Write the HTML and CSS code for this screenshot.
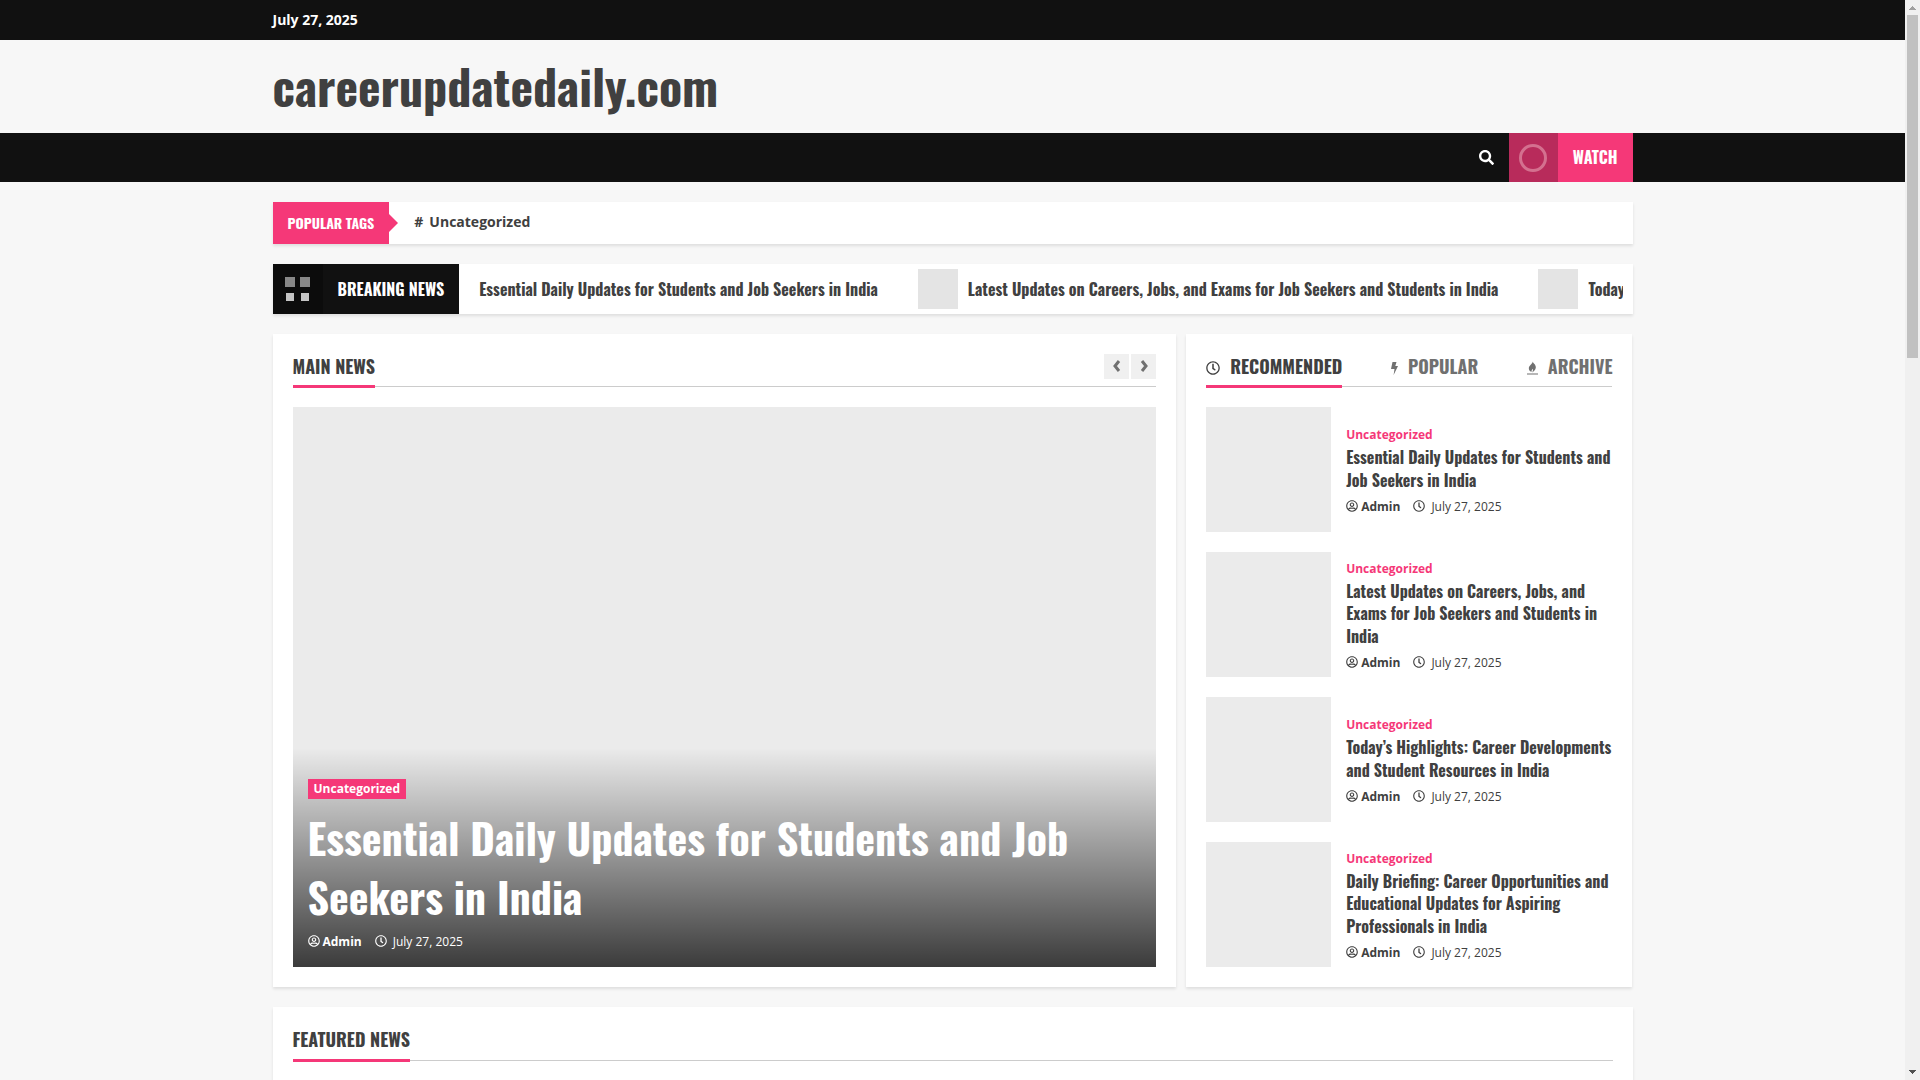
FILE: index.html
```html
<!DOCTYPE html>
<html lang="en">
<head>
<meta charset="utf-8">
<meta name="viewport" content="width=device-width, initial-scale=1">
<title>careerupdatedaily.com</title>
<link rel="stylesheet" href="styles.css">
</head>
<body>
<svg class="sprite" aria-hidden="true">
  <symbol id="clock" viewBox="0 0 512 512">
    <path d="M256 8C119 8 8 119 8 256s111 248 248 248 248-111 248-248S393 8 256 8zm0 448c-110.500 0-200-89.500-200-200S145.500 56 256 56s200 89.500 200 200-89.500 200-200 200zm61.800-104.400l-84.900-61.700c-3.100-2.300-4.900-5.900-4.900-9.700V116c0-6.600 5.400-12 12-12h32c6.600 0 12 5.400 12 12v141.700l66.800 48.600c5.400 3.900 6.500 11.400 2.600 16.800L334.600 349c-3.900 5.300-11.400 6.500-16.800 2.600z"/>
  </symbol>
  <symbol id="user" viewBox="0 0 496 512">
    <path d="M248 104c-53 0-96 43-96 96s43 96 96 96 96-43 96-96-43-96-96-96zm0 144c-26.500 0-48-21.500-48-48s21.500-48 48-48 48 21.500 48 48-21.500 48-48 48zm0-240C111 8 0 119 0 256s111 248 248 248 248-111 248-248S385 8 248 8zm0 448c-49.700 0-95.100-18.300-130.100-48.400 14.900-23 40.400-38.600 69.600-39.500 20.800 6.400 40.600 9.600 60.500 9.600s39.700-3.100 60.500-9.600c29.200 1 54.700 16.500 69.600 39.500-35 30.100-80.400 48.400-130.100 48.400zm162.700-84.100c-24.400-31.400-62.100-51.900-105.100-51.900-10.200 0-26 9.600-57.600 9.600-31.500 0-47.400-9.600-57.600-9.600-42.900 0-80.600 20.500-105.100 51.900C61.900 339.200 48 299.200 48 256c0-110.300 89.700-200 200-200s200 89.700 200 200c0 43.200-13.900 83.200-37.300 115.900z"/>
  </symbol>
  <symbol id="search" viewBox="0 0 512 512">
    <path d="M505 442.700L405.300 343c-4.500-4.500-10.600-7-17-7H372c27.600-35.300 44-79.700 44-128C416 93.100 322.900 0 208 0S0 93.100 0 208s93.100 208 208 208c48.300 0 92.700-16.400 128-44v16.300c0 6.400 2.500 12.500 7 17l99.700 99.700c9.400 9.400 24.600 9.400 33.900 0l28.300-28.300c9.400-9.400 9.400-24.600.1-34zM208 336c-70.700 0-128-57.200-128-128 0-70.700 57.200-128 128-128 70.700 0 128 57.200 128 128 0 70.700-57.200 128-128 128z"/>
  </symbol>
  <symbol id="bolt" viewBox="0 0 7 14"><path d="M1.500 1H5.500L4.300 5H7L2.600 14l.9-6H0z"/></symbol>
  <symbol id="fire" viewBox="0 0 12 14"><path d="M6.300 0c.2 2 3.700 3.300 3.300 6.800-.3 2.600-2.300 3.700-3.700 5 .2-1.600.9-2.500.5-4.100-1 .9-1.600 1.900-1.500 3.600C3 10.500 1.800 9 2 7c.3-2.700 3.800-4 4.300-7zM0 13h12v1H0z"/></symbol>
</svg>

<div class="window">
  <div class="page">
    <div class="topbar"><div class="container">July 27, 2025</div></div>
    <header class="masthead"><div class="container"><h1 class="site-title"><a href="#">careerupdatedaily.com</a></h1></div></header>
    <nav class="navbar">
      <div class="container">
        <button class="search" aria-label="Search"><svg><use href="#search"/></svg></button>
        <a class="watch" href="#"><span class="watch-icon"><span class="ring"></span></span><span class="watch-label">Watch</span></a>
      </div>
    </nav>

    <main class="container content">
      <section class="tags card">
        <h2 class="tags-title">Popular Tags</h2>
        <a class="tag" href="#"><span class="hash">#</span>Uncategorized</a>
      </section>

      <section class="ticker card">
        <div class="ticker-icon"><span class="square"></span><span class="square"></span><span class="square small"></span><span class="square small"></span></div>
        <h2 class="ticker-title">Breaking News</h2>
        <div class="ticker-track">
          <a class="ticker-item" href="#">Essential Daily Updates for Students and Job Seekers in India</a>
          <a class="ticker-item" href="#"><span class="ticker-thumb"></span>Latest Updates on Careers, Jobs, and Exams for Job Seekers and Students in India</a>
          <a class="ticker-item" href="#"><span class="ticker-thumb"></span>Today’s Highlights: Career Developments and Student Resources in India</a>
        </div>
      </section>

      <div class="columns">
        <section class="card panel main-news">
          <div class="heading">
            <h2 class="heading-title">Main News</h2>
            <div class="arrows">
              <button class="arrow" aria-label="Previous"><svg viewBox="0 0 8 12"><path d="M6 1 2 6l4 5"/></svg></button>
              <button class="arrow" aria-label="Next"><svg viewBox="0 0 8 12"><path d="M2 1l4 5-4 5"/></svg></button>
            </div>
          </div>
          <article class="hero">
            <div class="hero-text">
              <a class="badge" href="#">Uncategorized</a>
              <h3 class="hero-title"><a href="#">Essential Daily Updates for Students and Job Seekers in India</a></h3>
              <div class="meta"><svg><use href="#user"/></svg><a class="author" href="#">Admin</a><svg><use href="#clock"/></svg><span class="date">July 27, 2025</span></div>
            </div>
          </article>
        </section>

        <section class="card panel side">
          <div class="heading">
            <button class="tab heading-title"><svg class="tab-clock"><use href="#clock"/></svg>Recommended</button>
            <button class="tab muted"><svg class="tab-bolt"><use href="#bolt"/></svg>Popular</button>
            <button class="tab muted"><svg class="tab-fire"><use href="#fire"/></svg>Archive</button>
          </div>
          <div class="posts">
            <article class="post">
              <div class="thumb"></div>
              <div class="post-text">
                <a class="category" href="#">Uncategorized</a>
                <h3 class="post-title"><a href="#">Essential Daily Updates for Students and Job Seekers in India</a></h3>
                <div class="meta"><svg><use href="#user"/></svg><a class="author" href="#">Admin</a><svg><use href="#clock"/></svg><span class="date">July 27, 2025</span></div>
              </div>
            </article>
            <article class="post">
              <div class="thumb"></div>
              <div class="post-text">
                <a class="category" href="#">Uncategorized</a>
                <h3 class="post-title"><a href="#">Latest Updates on Careers, Jobs, and Exams for Job Seekers and Students in India</a></h3>
                <div class="meta"><svg><use href="#user"/></svg><a class="author" href="#">Admin</a><svg><use href="#clock"/></svg><span class="date">July 27, 2025</span></div>
              </div>
            </article>
            <article class="post">
              <div class="thumb"></div>
              <div class="post-text">
                <a class="category" href="#">Uncategorized</a>
                <h3 class="post-title"><a href="#">Today’s Highlights: Career Developments and Student Resources in India</a></h3>
                <div class="meta"><svg><use href="#user"/></svg><a class="author" href="#">Admin</a><svg><use href="#clock"/></svg><span class="date">July 27, 2025</span></div>
              </div>
            </article>
            <article class="post">
              <div class="thumb"></div>
              <div class="post-text">
                <a class="category" href="#">Uncategorized</a>
                <h3 class="post-title"><a href="#">Daily Briefing: Career Opportunities and Educational Updates for Aspiring Professionals in India</a></h3>
                <div class="meta"><svg><use href="#user"/></svg><a class="author" href="#">Admin</a><svg><use href="#clock"/></svg><span class="date">July 27, 2025</span></div>
              </div>
            </article>
          </div>
        </section>
      </div>

      <section class="card panel featured">
        <div class="heading"><h2 class="heading-title">Featured News</h2></div>
      </section>
    </main>
  </div>

  <div class="scrollbar" aria-hidden="true">
    <svg class="scroll-up" viewBox="0 0 7 4"><path d="M3 0h1v1h1v1h1v1h1v1H0V3h1V2h1V1h1z"/></svg>
    <div class="scroll-track"><div class="scroll-thumb"></div></div>
    <svg class="scroll-down" viewBox="0 0 7 4"><path d="M0 0h7v1H6v1H5v1H4v1H3V3H2V2H1V1H0z"/></svg>
  </div>
</div>
</body>
</html>
```
FILE: styles.css
```css
:root {
  --pink: #f53878;
  --black: #111;
  --text: #404040;
  --head: Oswald, "Roboto Condensed", sans-serif;
}

* { box-sizing: border-box; }

body {
  margin: 0;
  background: #f7f7f7;
  color: var(--text);
  font-family: "Open Sans", sans-serif;
  font-size: 14px;
}

h1, h2, h3 { margin: 0; font-family: var(--head); font-weight: 700; }
a { color: inherit; text-decoration: none; }
button { padding: 0; border: 0; background: none; color: inherit; cursor: pointer; }
svg { display: block; fill: currentColor; }
.sprite { display: none; }

.window { display: flex; height: 100vh; }
.page { flex: 1; min-width: 0; overflow: hidden; }
.container { width: 100%; max-width: 1360px; margin: 0 auto; }

/* header */
.topbar {
  background: var(--black);
  color: #fff;
  font-weight: 700;
  line-height: 20px;
  padding: 10px 0;
}
.masthead { padding: 10px 0 11px; }
.site-title { font-size: 48px; line-height: 72px; }
.navbar { background: var(--black); color: #fff; }
.navbar .container { display: flex; justify-content: flex-end; height: 49px; }
.search { padding: 0 15px; }
.search svg { width: 15px; height: 15px; }
.watch {
  display: flex;
  background: var(--pink);
  font-family: var(--head);
  font-weight: 700;
  font-size: 16px;
  line-height: 48px;
  text-transform: uppercase;
}
.watch-icon { display: grid; place-items: center; width: 49px; background: #b82b5b; }
.ring { width: 28px; height: 28px; border: 3px solid #d4708f; border-radius: 50%; }
.watch-label { padding: 0 15px; }

/* cards */
.content { display: flex; flex-direction: column; gap: 20px; padding-top: 20px; }
.card { background: #fff; box-shadow: 0 2px 3px rgba(0, 0, 0, .1); }

.tags { display: flex; align-items: center; gap: 25px; height: 42px; }
.tags-title {
  position: relative;
  padding: 0 15px;
  background: var(--pink);
  color: #fff;
  font-size: 14px;
  line-height: 42px;
  text-transform: uppercase;
}
.tags-title::after {
  content: "";
  position: absolute;
  left: 100%;
  top: 12px;
  border: solid transparent;
  border-width: 9px 0 9px 9px;
  border-left-color: var(--pink);
}
.tag { font-weight: 700; line-height: 20px; padding-bottom: 2px; }
.hash { margin-right: 6px; }

.ticker { display: flex; height: 50px; }
.ticker-icon {
  display: grid;
  grid-template-columns: 10px 10px;
  grid-template-rows: 10px 10px;
  gap: 5px;
  place-content: center;
  place-items: center;
  width: 50px;
  background: #0c0c0c;
}
.square { width: 10px; height: 10px; background: #888; }
.square.small { width: 8px; height: 8px; background: #c4c4c4; }
.ticker-title {
  padding: 0 15px;
  background: var(--black);
  color: #fff;
  font-size: 16px;
  line-height: 50px;
  text-transform: uppercase;
  white-space: nowrap;
}
.ticker-track {
  display: flex;
  flex: 1;
  gap: 40px;
  min-width: 0;
  margin: 0 10px;
  padding-left: 10px;
  overflow: hidden;
}
.ticker-item {
  display: flex;
  flex: none;
  align-items: center;
  gap: 10px;
  font: 700 16px var(--head);
}
.ticker-thumb { width: 40px; height: 40px; background: #e4e4e4; }

.columns { display: grid; grid-template-columns: 903fr 446fr; gap: 10px; }
.panel { padding: 20px; }

/* section headings */
.heading {
  display: flex;
  justify-content: space-between;
  height: 33px;
  margin-bottom: 20px;
  border-bottom: 1px solid #ccc;
}
.heading-title {
  height: 34px;
  border-bottom: 3px solid var(--pink);
  font-size: 18px;
  line-height: 24px;
  text-transform: uppercase;
}
.tab {
  display: flex;
  gap: 10px;
  height: 34px;
  font: 700 18px/24px var(--head);
  text-transform: uppercase;
}
.tab.muted { color: #707070; }
.tab svg { margin-top: 7px; }
.tab-clock { width: 14px; height: 14px; }
.tab-bolt { width: 7px; height: 14px; }
.tab-fire { width: 11px; height: 14px; }

.arrows { display: flex; gap: 2px; }
.arrow { display: grid; place-items: center; width: 25px; height: 25px; padding-bottom: 2px; background: #f0f0f0; color: #707070; }
.arrow svg { width: 8px; height: 12px; fill: none; stroke: currentColor; stroke-width: 3; }

/* lead story */
.hero {
  display: flex;
  align-items: flex-end;
  height: 560px;
  background: #ebebeb;
  color: #fff;
}
.hero-text {
  width: 100%;
  padding: 30px 15px 15px;
  background: linear-gradient(rgba(0, 0, 0, 0), rgba(0, 0, 0, .75));
}
.badge {
  display: inline-block;
  padding: 0 6px;
  background: var(--pink);
  font-size: 12px;
  font-weight: 700;
  line-height: 20px;
}
.hero-title { margin: 9px 0 6px; font-size: 42px; line-height: 1.4; }

.meta { display: flex; align-items: center; font-size: 12px; line-height: 20px; }
.meta svg { width: 12px; height: 12px; margin-bottom: 2px; }
.author { margin: 0 13px 0 3px; font-weight: 700; }
.date { margin-left: 6px; }

/* side list */
.posts { display: flex; flex-direction: column; gap: 20px; }
.post { display: flex; align-items: center; gap: 15px; }
.thumb { flex: none; width: 125px; height: 125px; background: #ebebeb; }
.post-text { padding-top: 2px; }
.category { color: var(--pink); font-size: 12px; font-weight: 700; line-height: 16px; }
.post-title { margin: 3px 0 6px; font-size: 16px; line-height: 1.4; }

.featured { min-height: 400px; }
.featured .heading { height: 34px; }
.featured .heading-title { height: 35px; }

/* scroll bar */
.scrollbar {
  display: flex;
  flex-direction: column;
  align-items: center;
  width: 15px;
  background: #f0f0f0;
}
.scroll-up { width: 7px; height: 4px; margin: 6px 0 5px; color: #a0a0a0; }
.scroll-down { width: 7px; height: 4px; margin: 5px 0 6px; color: #505050; }
.scroll-track { flex: 1; width: 11px; }
.scroll-thumb { height: 32.7%; background: #c1c1c1; }
```
